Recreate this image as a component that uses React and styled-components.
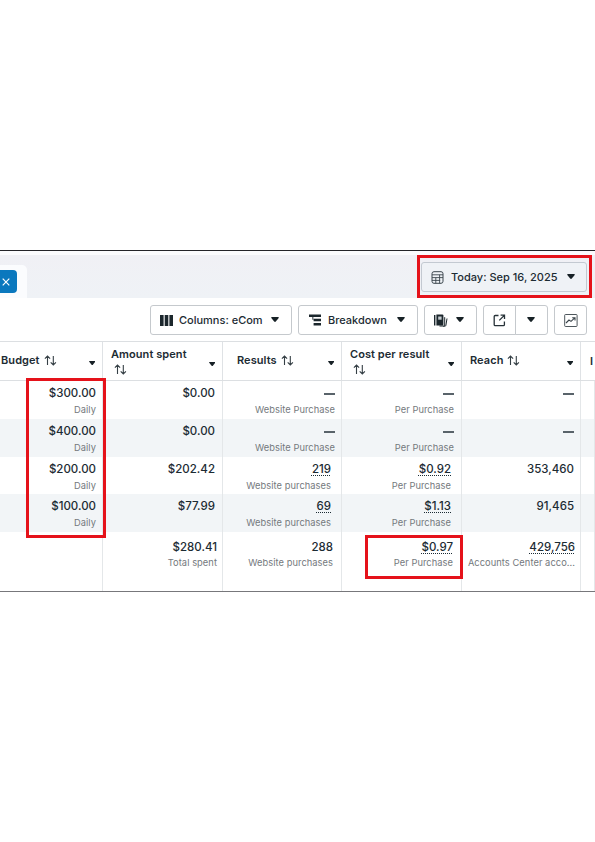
import styled, { createGlobalStyle } from "styled-components";

const GlobalStyle = createGlobalStyle`
  * {
    box-sizing: border-box;
  }
  body {
    margin: 0;
    background: #fff;
    color: #1c2b33;
    font-family: Inter, "Noto Sans", sans-serif;
  }
`;

const Page = styled.main`
  width: 595px;
  height: 842px;
  padding-top: 250px;
  overflow: hidden;
`;

const Panel = styled.section`
  position: relative;
  display: flex;
  flex-direction: column;
  height: 342px;
  overflow: hidden;
  border-top: 1px solid #242428;
  border-bottom: 1px solid #77777b;
`;

const TabBar = styled.header`
  display: flex;
  justify-content: space-between;
  height: 47px;
  flex: none;
  border-top: 4px solid #fbfbfd;
  background: linear-gradient(#f0f0f5, #eff2f6);
`;

const ActiveTab = styled.div`
  width: 27px;
  margin-top: 10px;
  padding-top: 5px;
  border-radius: 0 5px 0 0;
  background: #fbfcfe;
`;

const CloseChip = styled.button`
  display: flex;
  align-items: center;
  width: 17px;
  height: 23px;
  padding: 0 0 0 2px;
  border: 0;
  border-radius: 0 4px 4px 0;
  background: #0a78be;
`;

const Button = styled.button`
  display: flex;
  align-items: center;
  flex: none;
  width: ${({ $width }) => $width}px;
  height: 30px;
  padding: 0 0 0 ${({ $pad }) => $pad || 9}px;
  border: 1px solid #c5c9cd;
  border-radius: ${({ $radius }) => $radius || "3px"};
  background: #fff;
  color: #1c2b33;
  font: 500 11px Inter, sans-serif;
  white-space: nowrap;
`;

const DateButton = styled(Button)`
  height: 30px;
  margin: 7px 8px 0 0;
  border-color: #c3c9d1;
  background: #eff2f6;
`;

const Label = styled.span`
  width: ${({ $width }) => $width}px;
  margin-left: ${({ $gap }) => $gap}px;
  text-align: left;
`;

const Toolbar = styled.div`
  display: flex;
  justify-content: flex-end;
  gap: 6px;
  height: 43px;
  padding: 7px 8px 0 0;
  flex: none;
`;

const SplitButton = styled.div`
  display: flex;

  button + button {
    margin-left: -1px;
  }
`;

const Row = styled.div`
  display: grid;
  grid-template-columns: 103px 120px 119px 120px 119px 14px;
  height: ${({ $height }) => $height}px;
  flex: none;
  background: ${({ $shaded }) => ($shaded ? "#f2f5f7" : "#fff")};
`;

const HeadRow = styled(Row)`
  height: 40px;
  border-top: 1px solid #dcdfe2;
  border-bottom: 1px solid #dcdfe2;
`;

const HeadCell = styled.div`
  display: flex;
  align-items: center;
  justify-content: space-between;
  padding: 0 7px 0 ${({ $pad }) => $pad}px;
  border-right: 1px solid #dfe2e5;
  font-size: 11px;
  font-weight: 600;
  line-height: 15px;
  letter-spacing: 0.07px;
  white-space: nowrap;
  overflow: hidden;
`;

const HeadLabel = styled.div`
  display: flex;
  flex-direction: ${({ $stacked }) => ($stacked ? "column" : "row")};
  gap: ${({ $stacked }) => ($stacked ? 0 : 4)}px;
  margin-top: ${({ $stacked }) => ($stacked ? 1 : -2)}px;
`;

const SortWrap = styled.span`
  display: flex;
  align-items: center;
  height: 15px;
  padding-left: ${({ $stacked }) => ($stacked ? 3 : 0)}px;
`;

const CaretWrap = styled.span`
  display: flex;
  margin-top: ${({ $stacked }) => ($stacked ? 7 : 4)}px;
`;

const Cell = styled.div`
  display: flex;
  flex-direction: column;
  align-items: flex-end;
  min-width: 0;
  padding: ${({ $top }) => $top || 4}px ${({ $right }) => $right}px 0 0;
  border-right: 1px solid #e4e7e9;
`;

const Value = styled.span`
  height: 16px;
  font-size: 11.5px;
  font-weight: 500;
  line-height: 16px;
  text-decoration: ${({ $dotted }) => ($dotted ? "underline dotted 1px" : "none")};
  text-underline-offset: 2px;
  text-decoration-skip-ink: none;
`;

const Note = styled.span`
  margin-top: 0.5px;
  font-size: 9.3px;
  line-height: 16px;
  letter-spacing: 0.06px;
  color: #74797d;
  white-space: nowrap;
`;

const Dash = styled.span`
  width: 11px;
  height: 2px;
  margin: 8px 0 6px;
  background: #59636a;
`;

const Highlight = styled.div`
  position: absolute;
  left: ${({ $x }) => $x}px;
  top: ${({ $y }) => $y}px;
  width: ${({ $w }) => $w}px;
  height: ${({ $h }) => $h}px;
  border: 3px solid #e5121a;
  pointer-events: none;
`;

const Caret = ({ size = 8 }) => (
  <svg width={size} height={size * 0.65} viewBox="0 0 8 5">
    <path d="M.8 0h6.4q1 0 .5.8L4.8 4.5q-.8.8-1.6 0L.3.8Q-.2 0 .8 0Z" fill="#172126" />
  </svg>
);

const SortIcon = () => (
  <svg width="13" height="11" viewBox="0 0 13 11" fill="none" stroke="#353f45" strokeWidth="1.1">
    <path d="M3.5 10V1M.9 3.6 3.5 1l2.6 2.6M9.3 1v9M6.7 7.4 9.3 10l2.6-2.6" />
  </svg>
);

const CloseIcon = () => (
  <svg width="8" height="8" viewBox="0 0 8 8" stroke="#fff" strokeWidth="1.2">
    <path d="m.7.7 6.6 6.6M7.3.7.7 7.3" />
  </svg>
);

const CalendarIcon = () => (
  <svg width="13" height="13" viewBox="0 0 13 13" fill="none" stroke="#3b454d">
    <rect x="1" y=".7" width="11" height="11.6" rx="2" />
    <path d="M1 3.8h11M1 6.6h11M1 9.4h8.2M4.8 6.6v5.7M8.6 3.8v8.5" strokeWidth=".9" />
  </svg>
);

const ColumnsIcon = () => (
  <svg width="13" height="11" viewBox="0 0 13 11" fill="#1c272d">
    <path d="M0 0h3.6v11H0zM4.7 0h3.6v11H4.7zM9.4 0H13v11H9.4z" />
  </svg>
);

const BreakdownIcon = () => (
  <svg width="12" height="12" viewBox="0 0 12 12" fill="#1c272d">
    <path d="M0 .4h12v2.6H0zM4.6 4.7H12v2.6H4.6zM4.6 9H12v2.6H4.6zM3.4 2.5h.9v3.2h-.9z" />
  </svg>
);

const ReportsIcon = () => (
  <svg width="14" height="13" viewBox="0 0 14 13">
    <path d="M0 1h1.4v10.5H0z" fill="#1c272d" />
    <path d="M2.4.5h6q1 0 1 1v9q0 1-1 1h-6z" fill="#1c272d" />
    <path d="M4.2 2.5h3.4v3.2H4.2z" fill="#c5ccd0" />
    <path d="M5.5 12h4.2q1 0 1-1V3.2M9.2 12.3h1.5q1 0 1.2-1L13 4.5" fill="none" stroke="#1c272d" />
  </svg>
);

const ExportIcon = () => (
  <svg width="13" height="13" viewBox="0 0 13 13" fill="none" stroke="#273238" strokeWidth="1.3">
    <path d="M5.5 1.5H2.2q-1 0-1 1v8.2q0 1 1 1h8.2q1 0 1-1V7.5M7.6 1.2h3.9v3.9M11.3 1.4 6.3 6.4" />
  </svg>
);

const ChartIcon = () => (
  <svg width="14" height="13" viewBox="0 0 14 13" fill="none" stroke="#3a444a">
    <rect x=".7" y=".5" width="12.4" height="12" rx=".8" strokeWidth=".9" />
    <path d="m2 9 3-3 2 1.4 3.8-3.5M8.2 3.8h2.8v2.7" strokeWidth="1.1" />
  </svg>
);

const columns = [
  { name: "Budget", pad: 1 },
  { name: "Amount spent", pad: 8, stacked: true },
  { name: "Results", pad: 14 },
  { name: "Cost per result", pad: 8, stacked: true },
  { name: "Reach", pad: 8 },
];

const rowHeights = [38, 38, 37, 38];

// value, note, right padding, dotted underline
const rows = [
  [
    ["$300.00", "Daily", 6],
    ["$0.00", "", 7],
    [null, "Website Purchase", 6],
    [null, "Per Purchase", 7],
    [null, "", 6],
  ],
  [
    ["$400.00", "Daily", 6],
    ["$0.00", "", 7],
    [null, "Website Purchase", 6],
    [null, "Per Purchase", 7],
    [null, "", 6],
  ],
  [
    ["$200.00", "Daily", 6],
    ["$202.42", "", 7],
    ["219", "Website purchases", 10, true],
    ["$0.92", "Per Purchase", 10, true],
    ["353,460", "", 6],
  ],
  [
    ["$100.00", "Daily", 6],
    ["$77.99", "", 7],
    ["69", "Website purchases", 10, true],
    ["$1.13", "Per Purchase", 10, true],
    ["91,465", "", 6],
  ],
];

const totals = [
  ["", "", 6],
  ["$280.41", "Total spent", 5],
  ["288", "Website purchases", 8],
  ["$0.97", "Per Purchase", 8, true],
  ["429,756", "Accounts Center acco...", 5, true],
];

const Cells = ({ items, top }) =>
  items.map(([value, note, right, dotted], i) => (
    <Cell key={i} $right={right} $top={top}>
      {value === null ? <Dash /> : <Value $dotted={dotted}>{value}</Value>}
      {note && <Note>{note}</Note>}
    </Cell>
  ));

const App = () => {
  return (
    <Page>
      <GlobalStyle />
      <Panel>
        <TabBar>
          <ActiveTab>
            <CloseChip aria-label="Close">
              <CloseIcon />
            </CloseChip>
          </ActiveTab>
          <DateButton $width={166}>
            <CalendarIcon />
            <Label $gap={7} $width={116}>
              Today: Sep 16, 2025
            </Label>
            <Caret />
          </DateButton>
        </TabBar>

        <Toolbar>
          <Button $width={142}>
            <ColumnsIcon />
            <Label $gap={6} $width={92}>
              Columns: eCom
            </Label>
            <Caret />
          </Button>
          <Button $width={120} $pad={10}>
            <BreakdownIcon />
            <Label $gap={7} $width={69}>
              Breakdown
            </Label>
            <Caret />
          </Button>
          <Button $width={53} aria-label="Reports">
            <ReportsIcon />
            <Label $gap={0} $width={8} />
            <Caret />
          </Button>
          <SplitButton>
            <Button $width={33} $radius="3px 0 0 3px" aria-label="Export">
              <ExportIcon />
            </Button>
            <Button $width={33} $pad={11} $radius="0 3px 3px 0" aria-label="Export options">
              <Caret />
            </Button>
          </SplitButton>
          <Button $width={33} aria-label="Charts">
            <ChartIcon />
          </Button>
        </Toolbar>

        <HeadRow>
          {columns.map(({ name, pad, stacked }) => (
            <HeadCell key={name} $pad={pad}>
              <HeadLabel $stacked={stacked}>
                {name}
                <SortWrap $stacked={stacked}>
                  <SortIcon />
                </SortWrap>
              </HeadLabel>
              <CaretWrap $stacked={stacked}>
                <Caret size={6.5} />
              </CaretWrap>
            </HeadCell>
          ))}
          <HeadCell $pad={9}>I</HeadCell>
        </HeadRow>

        {rows.map((items, i) => (
          <Row key={i} $height={rowHeights[i]} $shaded={i % 2 === 1}>
            <Cells items={items} />
            <Cell $right={0} />
          </Row>
        ))}
        <Row $height={60}>
          <Cells items={totals} top={6.5} />
          <Cell $right={0} />
        </Row>

        <Highlight $x={417} $y={4} $w={175} $h={43} />
        <Highlight $x={26} $y={127} $w={80} $h={160} />
        <Highlight $x={365} $y={284} $w={98} $h={44} />
      </Panel>
    </Page>
  );
};

export default App;
